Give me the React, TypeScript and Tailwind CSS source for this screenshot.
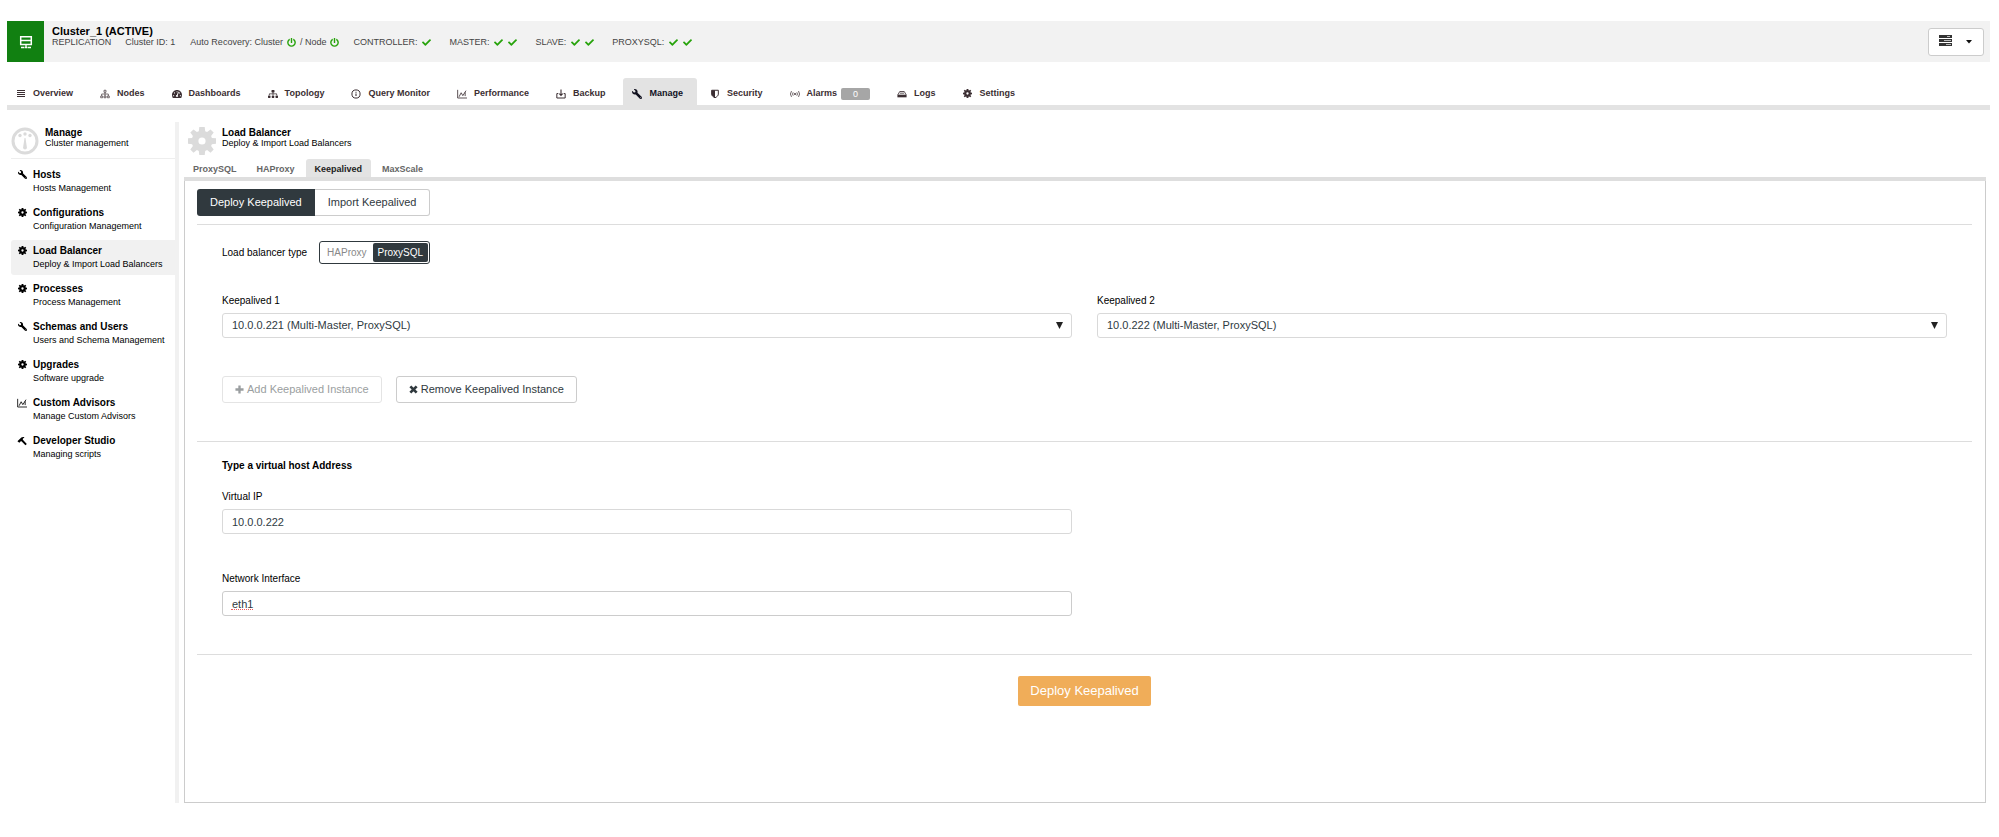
import type { ReactNode } from 'react';
import { FaCheck, FaPowerOff, FaSitemap, FaTachometerAlt, FaWrench } from 'react-icons/fa';

interface IconProps {
  className?: string;
}

const Gear = ({ className }: IconProps) => (
  <svg viewBox="0 0 28 28" className={className} fill="currentColor" aria-hidden="true">
    <path
      fillRule="evenodd"
      d="M11.3 0h5.400l.5 4.200 1.900.800 3.400-2.600 3.200 3.200-2.600 3.300.8 2 4.100.4v5.400l-4.100.5-.8 1.900 2.600 3.400-3.200 3.200-3.400-2.600-1.900.8-.5 4h-5.400l-.5-4-1.900-.8-3.400 2.600-3.200-3.200 2.600-3.400-.8-1.900-4.100-.5v-5.400l4.100-.4.8-2-2.600-3.300 3.200-3.200 3.400 2.600 1.900-.8zM14 10.400a3.600 3.600 0 1 0 0 7.200 3.600 3.600 0 0 0 0-7.200z"
    />
  </svg>
);

const Gauge = ({ className }: IconProps) => (
  <svg viewBox="0 0 28 28" className={className} aria-hidden="true">
    <circle cx="14" cy="14" r="12" fill="#fff" stroke="#dbdbdb" strokeWidth="3" />
    <g fill="#dbdbdb">
      <circle cx="9" cy="8.500" r="1.700" />
      <circle cx="14" cy="7" r="1.700" />
      <circle cx="19" cy="8.500" r="1.700" />
      <path d="M13.500 11h1l1.400 9.500a1.900 1.900 0 0 1-3.800 0z" />
    </g>
  </svg>
);

const Bars = ({ className }: IconProps) => (
  <svg viewBox="0 0 10 10" className={className} aria-hidden="true">
    <path d="M1 1.500h8M1 3.500h8M1 5.500h8M1 7.500h8" stroke="currentColor" strokeWidth="1.100" />
  </svg>
);

const NodesIcon = ({ className }: IconProps) => (
  <svg viewBox="0 0 12 12" className={className} fill="none" stroke="currentColor" strokeWidth="0.800" aria-hidden="true">
    <path d="M4.800 1.500h2.400v2.400H4.800zM6 4v4.500M2 8.500V6h8v2.500M.8 8.500h2.400v2H.8zM4.800 8.500h2.400v2H4.800zM8.800 8.500h2.400v2H8.800z" />
  </svg>
);

const InfoIcon = ({ className }: IconProps) => (
  <svg viewBox="0 0 12 12" className={className} fill="none" stroke="currentColor" aria-hidden="true">
    <circle cx="6" cy="6" r="4.900" strokeWidth="1.200" />
    <path d="M6 5.300v3.200M6 3.200v1.200" strokeWidth="1.300" />
  </svg>
);

const ChartIcon = ({ className }: IconProps) => (
  <svg viewBox="0 0 12 12" className={className} fill="none" stroke="currentColor" aria-hidden="true">
    <path d="M.8 1v9.800H12" />
    <path d="M2.500 9.300l2.500-4.800 2 3.500 3.800-6M9.800 4v4.500" />
  </svg>
);

const BackupIcon = ({ className }: IconProps) => (
  <svg viewBox="0 0 12 12" className={className} fill="none" stroke="currentColor" aria-hidden="true">
    <path d="M2.800 5.500H1v5.300h10V5.500H9.200" strokeWidth="1.200" />
    <path d="M6 .5v7M4 5.500l2 2.200 2-2.200" strokeWidth="1.300" />
  </svg>
);

const ShieldIcon = ({ className }: IconProps) => (
  <svg viewBox="0 0 12 12" className={className} aria-hidden="true">
    <path d="M2 1.500h8v4.600c0 2-1.700 3.300-4 4.400-2.300-1.100-4-2.400-4-4.400z" fill="none" stroke="currentColor" strokeWidth="1.200" />
    <path d="M2 1.500h4v9C3.700 9.400 2 8.100 2 6.100z" fill="currentColor" />
  </svg>
);

const AlarmIcon = ({ className }: IconProps) => (
  <svg viewBox="0 0 12 12" className={className} fill="none" stroke="currentColor" strokeWidth="0.900" aria-hidden="true">
    <path d="M1.800 2.500a6 6 0 0 0 0 7M10.200 2.500a6 6 0 0 1 0 7M3.800 4a3.500 3.500 0 0 0 0 4M8.200 4a3.500 3.500 0 0 1 0 4" />
    <circle cx="6" cy="6" r="1.100" fill="currentColor" stroke="none" />
  </svg>
);

const LogsIcon = ({ className }: IconProps) => (
  <svg viewBox="0 0 12 12" className={className} fill="none" stroke="currentColor" aria-hidden="true">
    <path d="M1 7L3.300 3h5.400L11 7" />
    <path d="M.5 6.800h11V10H.5z" fill="currentColor" stroke="none" />
    <path d="M3.500 5h5" />
  </svg>
);

const HammerIcon = ({ className }: IconProps) => (
  <svg viewBox="0 0 12 12" className={className} fill="currentColor" aria-hidden="true">
    <path d="M.5 6.400L5.200 1.800c1.200-.9 2.600-.9 3.800-.3L7 3.400v1.100l4.800 5-1.700 1.700-4.700-5-.9.200-1.700 1.700z" />
  </svg>
);

const PlusIcon = ({ className }: IconProps) => (
  <svg viewBox="0 0 10 10" className={className} aria-hidden="true">
    <path d="M5 .5v9M.5 5h9" stroke="currentColor" strokeWidth="2.600" />
  </svg>
);

const CrossIcon = ({ className }: IconProps) => (
  <svg viewBox="0 0 10 10" className={className} aria-hidden="true">
    <path d="M1.500 1.500l7 7M8.500 1.500l-7 7" stroke="currentColor" strokeWidth="3" />
  </svg>
);

const MonitorIcon = ({ className }: IconProps) => (
  <svg viewBox="0 0 14 14" className={className} fill="none" stroke="currentColor" aria-hidden="true">
    <path d="M1.700 1.700h10.600v3.800H1.700zM1.700 5.500h10.600v4H1.700z" strokeWidth="1.500" />
    <path d="M7 9v3M2 12.500h3M5.500 12.500h3M9 12.500h3" strokeWidth="1.300" />
  </svg>
);

const ServerIcon = ({ className }: IconProps) => (
  <svg viewBox="0 0 13 13" className={className} aria-hidden="true">
    <path d="M0 0h13v3H0zM0 4h13v3H0zM0 8h13v3H0z" fill="#333" />
    <path d="M8 1h3v1H8zM5 5h7v1H5zM7 9h5v1H7z" fill="#bbb" />
  </svg>
);

const Wrench = ({ className }: IconProps) => <FaWrench className={`${className} -scale-x-100`} aria-hidden="true" />;

interface NavItem {
  label: string;
  icon: ReactNode;
  active?: boolean;
  badge?: string;
}

const navItems: NavItem[] = [
  { label: 'Overview', icon: <Bars className="size-2.5" /> },
  { label: 'Nodes', icon: <NodesIcon className="size-2.5" /> },
  { label: 'Dashboards', icon: <FaTachometerAlt className="size-2.5" /> },
  { label: 'Topology', icon: <FaSitemap className="size-2.5" /> },
  { label: 'Query Monitor', icon: <InfoIcon className="size-2.5" /> },
  { label: 'Performance', icon: <ChartIcon className="size-2.5" /> },
  { label: 'Backup', icon: <BackupIcon className="size-2.5" /> },
  { label: 'Manage', icon: <Wrench className="size-2.5" />, active: true },
  { label: 'Security', icon: <ShieldIcon className="size-2.5" /> },
  { label: 'Alarms', icon: <AlarmIcon className="size-2.5" />, badge: '0' },
  { label: 'Logs', icon: <LogsIcon className="size-2.5" /> },
  { label: 'Settings', icon: <Gear className="size-[9px]" /> },
];

const sideItems = [
  { title: 'Hosts', text: 'Hosts Management', icon: <Wrench className="size-[9px]" /> },
  { title: 'Configurations', text: 'Configuration Management', icon: <Gear className="size-[9px]" /> },
  { title: 'Load Balancer', text: 'Deploy & Import Load Balancers', icon: <Gear className="size-[9px]" />, active: true },
  { title: 'Processes', text: 'Process Management', icon: <Gear className="size-[9px]" /> },
  { title: 'Schemas and Users', text: 'Users and Schema Management', icon: <Wrench className="size-[9px]" /> },
  { title: 'Upgrades', text: 'Software upgrade', icon: <Gear className="size-[9px]" /> },
  { title: 'Custom Advisors', text: 'Manage Custom Advisors', icon: <ChartIcon className="size-2.5" /> },
  { title: 'Developer Studio', text: 'Managing scripts', icon: <HammerIcon className="size-2.5" /> },
];

const subTabs = ['ProxySQL', 'HAProxy', 'Keepalived', 'MaxScale'];

const statuses = [
  { label: 'CONTROLLER:', nodes: ['c1'] },
  { label: 'MASTER:', nodes: ['m1', 'm2'] },
  { label: 'SLAVE:', nodes: ['s1', 's2'] },
  { label: 'PROXYSQL:', nodes: ['p1', 'p2'] },
];

const ClusterHeader = () => (
  <header className="flex h-[41px] items-center bg-[#f2f2f2]">
    <div className="flex h-full w-[37px] items-center justify-center bg-[#118011] text-white">
      <MonitorIcon className="size-3.5" />
    </div>
    <div className="flex-1 self-start pt-1 pl-2">
      <h1 className="text-[11px] leading-3 font-bold text-black">Cluster_1 (ACTIVE)</h1>
      <div className="flex items-center text-[9px] leading-[11px] text-[#444]">
        <span className="mr-3.5">REPLICATION</span>
        <span className="mr-[15px]">Cluster ID: 1</span>
        <span className="mr-3.5 flex items-center gap-1">
          Auto Recovery: Cluster <FaPowerOff className="size-[9px] text-[#27a30b]" /> / Node{' '}
          <FaPowerOff className="size-[9px] text-[#27a30b]" />
        </span>
        {statuses.map((status) => (
          <span key={status.label} className="mr-[18px] flex items-center gap-[5px]">
            {status.label}
            {status.nodes.map((node) => (
              <FaCheck key={node} className="size-[9px] text-[#27a30b]" />
            ))}
          </span>
        ))}
      </div>
    </div>
    <button
      type="button"
      aria-label="Cluster actions"
      className="mr-1.5 flex h-7 w-14 items-center justify-between rounded-[3px] border border-[#ccc] bg-white pr-[11px] pl-2.5"
    >
      <ServerIcon className="size-[13px]" />
      <svg viewBox="0 0 6 4" className="h-1 w-1.5">
        <path d="M0 0h6L3 3.500z" fill="#111" />
      </svg>
    </button>
  </header>
);

const MainNav = () => (
  <nav className="mt-4 flex border-b-[5px] border-[#e3e3e3]">
    {navItems.map((item) => (
      <a
        key={item.label}
        href="#"
        className={`mr-1 flex h-[27px] items-center rounded-t-[3px] pt-1 pr-3.5 pl-[9px] text-[9px] font-bold ${
          item.active ? 'bg-[#e3e3e3] text-[#11111f]' : 'text-[#3b2e32]'
        }`}
      >
        <span className="mr-[7px] flex w-2.5 justify-center">{item.icon}</span>
        {item.label}
        {item.badge && (
          <span className="ml-1 w-[29px] rounded-[2px] bg-[#a6a6a6] text-center leading-3 font-normal text-white">
            {item.badge}
          </span>
        )}
      </a>
    ))}
  </nav>
);

const Sidebar = () => (
  <aside className="w-[172px] shrink-0 border-r-4 border-[#f1f1f1] pl-1">
    <div className="flex h-[37px] gap-1.5 border-b border-[#eee] pt-[5px]">
      <Gauge className="size-7 shrink-0" />
      <div className="leading-[11px]">
        <h2 className="text-[10px] font-bold">Manage</h2>
        <p className="text-[9px]">Cluster management</p>
      </div>
    </div>
    <ul className="mt-[5px] flex flex-col gap-[3px]">
      {sideItems.map((item) => (
        <li key={item.title}>
          <a
            href="#"
            className={`flex h-[35px] gap-1.5 rounded-l-[3px] pt-1 pl-1.5 whitespace-nowrap ${item.active ? 'bg-[#f1f1f1]' : ''}`}
          >
            <span className="flex w-2.5 justify-center pt-0.5">{item.icon}</span>
            <span className="block">
              <span className="block text-[10px] leading-[14px] font-bold">{item.title}</span>
              <span className="block text-[9px] leading-[13px]">{item.text}</span>
            </span>
          </a>
        </li>
      ))}
    </ul>
  </aside>
);

interface HostSelectProps {
  id: string;
  label: string;
  value: string;
}

const HostSelect = ({ id, label, value }: HostSelectProps) => (
  <div>
    <label htmlFor={id} className="block text-[10px] leading-3">
      {label}
    </label>
    <div className="relative mt-1.5">
      <select
        id={id}
        className="block h-[25px] w-full appearance-none rounded-[3px] border border-[#d9d9d9] bg-white px-[9px] text-[11px] text-[#2f3a3f]"
      >
        <option>{value}</option>
      </select>
      <svg viewBox="0 0 8 8" className="pointer-events-none absolute top-[9px] right-[9px] size-[7px]">
        <path d="M0 0h8L4 8z" fill="#222" />
      </svg>
    </div>
  </div>
);

const KeepalivedForm = () => (
  <section className="border border-t-0 border-[#ccc] pt-2 pr-[13px] pb-24 pl-3">
    <div className="flex text-[11px]">
      <button type="button" className="h-[27px] rounded-l-[3px] bg-[#30393e] px-[13px] text-white">
        Deploy Keepalived
      </button>
      <button type="button" className="h-[27px] rounded-r-[3px] border border-l-0 border-[#ccc] bg-white px-[13px] text-[#30393e]">
        Import Keepalived
      </button>
    </div>
    <hr className="mt-2 border-[#ddd]" />

    <div className="px-[25px]">
      <div className="mt-4 flex items-center gap-3 text-[10px]">
        <span id="lb-type">Load balancer type</span>
        <div role="group" aria-labelledby="lb-type" className="flex h-[23px] rounded-[3px] border border-[#30393e] p-px">
          <button type="button" className="px-1.5 text-[#888]">
            HAProxy
          </button>
          <button type="button" aria-pressed="true" className="rounded-[2px] bg-[#30393e] px-[5px] text-white">
            ProxySQL
          </button>
        </div>
      </div>

      <div className="mt-[31px] grid grid-cols-2 gap-[25px]">
        <HostSelect id="keepalived-1" label="Keepalived 1" value="10.0.0.221 (Multi-Master, ProxySQL)" />
        <HostSelect id="keepalived-2" label="Keepalived 2" value="10.0.222 (Multi-Master, ProxySQL)" />
      </div>

      <div className="mt-[38px] flex gap-3.5 text-[11px]">
        <button
          type="button"
          disabled
          className="flex h-[27px] items-center gap-[3px] rounded-[3px] border border-[#e4e4e4] px-3 text-[#9a9ea0]"
        >
          <PlusIcon className="size-[9px]" /> Add Keepalived Instance
        </button>
        <button
          type="button"
          className="flex h-[27px] items-center gap-[3px] rounded-[3px] border border-[#ccc] px-3 text-[#30393e]"
        >
          <CrossIcon className="size-[9px]" /> Remove Keepalived Instance
        </button>
      </div>
    </div>
    <hr className="mt-[38px] border-[#ddd]" />

    <div className="px-[25px]">
      <h3 className="mt-[18px] text-[10px] leading-3 font-bold">Type a virtual host Address</h3>
      <div className="grid grid-cols-2 gap-[25px]">
        <div>
          <label htmlFor="virtual-ip" className="mt-[19px] block text-[10px] leading-3">
            Virtual IP
          </label>
          <input
            id="virtual-ip"
            defaultValue="10.0.0.222"
            className="mt-1.5 block h-[25px] w-full rounded-[3px] border border-[#d9d9d9] px-[9px] text-[11px] text-[#2f3a3f]"
          />
          <label htmlFor="network-interface" className="mt-[39px] block text-[10px] leading-3">
            Network Interface
          </label>
          <div className="relative mt-1.5">
            <input
              id="network-interface"
              defaultValue="eth1"
              className="block h-[25px] w-full rounded-[3px] border border-[#ccc] px-[9px] text-[11px] text-[#2f3a3f]"
            />
            <span className="pointer-events-none absolute bottom-1.5 left-[9px] w-[22px] border-b border-dotted border-[#f05a5a]" />
          </div>
        </div>
      </div>
    </div>
    <hr className="mt-[38px] border-[#ddd]" />

    <div className="mt-[21px] flex justify-center">
      <button type="button" className="h-[30px] rounded-[2px] bg-[#f0ad59] px-3 text-[13px] text-white">
        Deploy Keepalived
      </button>
    </div>
  </section>
);

const App = () => (
  <div className="bg-white pt-[21px] pr-[9px] pb-[34px] pl-[7px] font-['Liberation_Sans',Arial,sans-serif] text-black">
    <ClusterHeader />
    <MainNav />
    <div className="mt-3 flex">
      <Sidebar />
      <main className="mr-1 ml-[5px] flex-1">
        <div className="flex h-[37px] gap-1.5 pt-[5px] pl-1">
          <Gear className="size-7 text-[#dbdbdb]" />
          <div className="leading-[11px]">
            <h2 className="text-[10px] font-bold">Load Balancer</h2>
            <p className="text-[9px]">Deploy &amp; Import Load Balancers</p>
          </div>
        </div>
        <nav className="flex gap-0.5 border-b-4 border-[#dedede]">
          {subTabs.map((tab) => (
            <a
              key={tab}
              href="#"
              className={`flex h-[18px] items-center rounded-t-[3px] px-[9px] pt-[3px] text-[9px] font-bold ${
                tab === 'Keepalived' ? 'bg-[#e3e3e3] text-[#222]' : 'text-[#666]'
              }`}
            >
              {tab}
            </a>
          ))}
        </nav>
        <KeepalivedForm />
      </main>
    </div>
  </div>
);

export default App;
